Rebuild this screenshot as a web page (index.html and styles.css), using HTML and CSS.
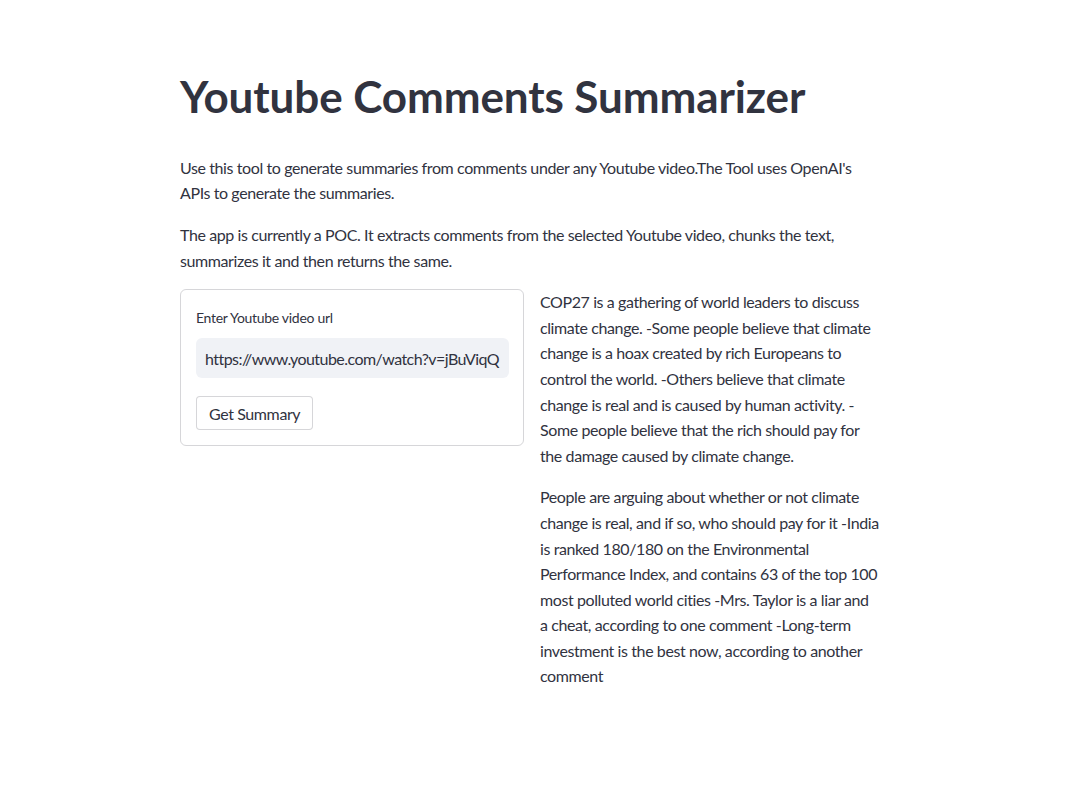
FILE: index.html
```html
<!DOCTYPE html>
<html lang="en">
<head>
  <meta charset="UTF-8">
  <title>Youtube Comments Summarizer</title>
  <link rel="stylesheet" href="styles.css">
</head>
<body>
  <main class="main">
    <h1 class="title">Youtube Comments Summarizer</h1>

    <p>Use this tool to generate summaries from comments under any Youtube video.The Tool uses OpenAI's APIs to generate the summaries.</p>
    <p>The app is currently a POC. It extracts comments from the selected Youtube video, chunks the text, summarizes it and then returns the same.</p>

    <div class="columns">
      <div class="col">
        <form class="card" onsubmit="return false">
          <label for="url" class="label">Enter Youtube video url</label>
          <input id="url" class="input" type="text" value="https://www.youtube.com/watch?v=jBuViqQ">
          <button class="btn" type="submit">Get Summary</button>
        </form>
      </div>
      <div class="col">
        <p>COP27 is a gathering of world leaders to discuss climate change. -Some people believe that climate change is a hoax created by rich Europeans to control the world. -Others believe that climate change is real and is caused by human activity. -Some people believe that the rich should pay for the damage caused by climate change.</p>
        <p>People are arguing about whether or not climate change is real, and if so, who should pay for it -India is ranked 180/180 on the Environmental Performance Index, and contains 63 of the top 100 most polluted world cities -Mrs. Taylor is a liar and a&nbsp;cheat, according to one comment -Long-term investment is the best now, according to another comment</p>
      </div>
    </div>
  </main>
</body>
</html>
```

FILE: styles.css
```css
body {
  margin: 0;
  font-family: Lato, "Noto Sans", sans-serif;
  color: rgb(49, 51, 63);
  background: #fff;
}
.main {
  width: 704px;
  margin: 0 auto;
  padding: 70px 25px 80px 16px;
}
.title {
  font-size: 44px;
  font-weight: 700;
  line-height: 1.2;
  letter-spacing: -0.1px;
  margin: 0 0 32px;
}
p {
  font-size: 16px;
  line-height: 1.6;
  letter-spacing: -0.4px;
  margin: 0 0 16px;
}
.columns {
  display: flex;
  gap: 16px;
}
.col {
  flex: 1;
  min-width: 0;
}
.card {
  border: 1px solid rgba(49, 51, 63, 0.2);
  border-radius: 6px;
  padding: 17px 14px 15px 15px;
}
.label {
  display: block;
  font-size: 14px;
  line-height: 22px;
  letter-spacing: -0.3px;
  margin-bottom: 9px;
}
.input {
  display: block;
  width: 100%;
  box-sizing: border-box;
  height: 40px;
  border: none;
  border-radius: 6px;
  background: rgb(240, 242, 246);
  color: rgb(49, 51, 63);
  font-family: inherit;
  font-size: 16px;
  letter-spacing: -0.55px;
  padding: 0 4px 0 9px;
  margin-bottom: 18px;
  outline: none;
}
.btn {
  display: block;
  height: 34px;
  padding: 0 12px;
  background: #fff;
  border: 1px solid rgba(49, 51, 63, 0.2);
  border-radius: 4px;
  font-family: inherit;
  font-size: 16px;
  letter-spacing: -0.4px;
  color: rgb(49, 51, 63);
}
```
